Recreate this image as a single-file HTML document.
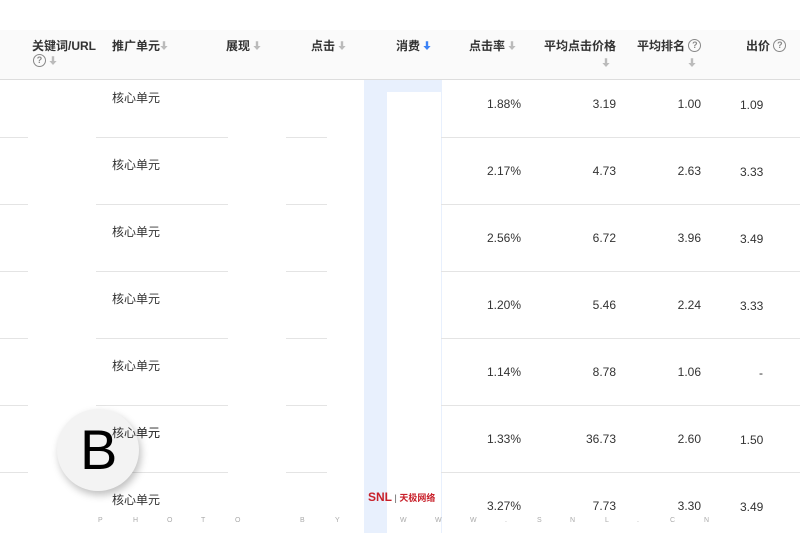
<!DOCTYPE html>
<html><head><meta charset="utf-8"><style>
*{margin:0;padding:0;box-sizing:border-box}
body{width:800px;height:533px;overflow:hidden;background:#fff;position:relative;font-family:"Liberation Sans","Noto Sans CJK SC",sans-serif;color:#333}
.a{position:absolute;white-space:nowrap}
.hdr{position:absolute;left:0;top:30px;width:800px;height:50px;background:#fafafa;border-bottom:1px solid #ddd}
.h{position:absolute;font-size:12px;line-height:16px;font-weight:bold;color:#333;top:38px;white-space:nowrap}
.q{display:inline-block;width:13px;height:13px;border:1.3px solid #888;border-radius:50%;font-size:9px;line-height:11px;text-align:center;color:#888;font-weight:bold;vertical-align:top;margin-top:1px}
.ln{position:absolute;height:1px;background:#e4e4e4}
.t{position:absolute;font-size:12px;color:#333}
.r{text-align:right;width:60px}
.w{position:absolute;top:517px;font-size:7px;color:#aaa}
svg{vertical-align:-1px}
</style></head><body>
<div class="hdr"></div>
<div style="position:absolute;left:364px;top:80px;width:77px;height:453px;background:#e8f0fd"></div>
<div style="position:absolute;left:387px;top:92px;width:54px;height:441px;background:#fff"></div>
<div style="position:absolute;left:441px;top:80px;width:1px;height:453px;background:#e8f0fd"></div>
<svg width="0" height="0" style="position:absolute"><defs><symbol id="ar" viewBox="0 0 10 12"><path d="M3.5 0h3v6h3L5 11 .5 6h3z"/></symbol></defs></svg>

<div class="h" style="left:32px">关键词/URL</div>
<div class="h" style="left:33px;top:53px"><span class="q">?</span> <svg width="8" height="10" fill="#bbb"><use href="#ar"/></svg></div>
<div class="h" style="left:112px">推广单元<svg width="8" height="10" fill="#bbb"><use href="#ar"/></svg></div>
<div class="h" style="left:226px">展现 <svg width="8" height="10" fill="#bbb"><use href="#ar"/></svg></div>
<div class="h" style="left:311px">点击 <svg width="8" height="10" fill="#bbb"><use href="#ar"/></svg></div>
<div class="h" style="left:396px">消费 <svg width="8" height="10" fill="#3b82f6"><use href="#ar"/></svg></div>
<div class="h" style="left:469px">点击率 <svg width="8" height="10" fill="#bbb"><use href="#ar"/></svg></div>
<div class="h" style="left:544px">平均点击价格</div>
<div class="h" style="left:602px;top:55px"><svg width="8" height="10" fill="#bbb"><use href="#ar"/></svg></div>
<div class="h" style="left:637px">平均排名 <span class="q">?</span></div>
<div class="h" style="left:688px;top:55px"><svg width="8" height="10" fill="#bbb"><use href="#ar"/></svg></div>
<div class="h" style="left:746px">出价 <span class="q">?</span></div>

<div id="rows"></div>
<script>
var d=[["1.88%","3.19","1.00","1.09"],["2.17%","4.73","2.63","3.33"],["2.56%","6.72","3.96","3.49"],["1.20%","5.46","2.24","3.33"],["1.14%","8.78","1.06","-"],["1.33%","36.73","2.60","1.50"],["3.27%","7.73","3.30","3.49"]];
var h="";
for(var i=0;i<7;i++){var y=80+i*67;
if(i>0){[[0,28],[96,228],[286,327],[441,800]].forEach(function(s){h+='<div class="ln" style="top:'+(y-10)+'px;left:'+s[0]+'px;width:'+(s[1]-s[0])+'px"></div>'});}
h+='<div class="t" style="left:112px;top:'+(y+9)+'px">核心单元</div>';
h+='<div class="t r" style="left:461px;top:'+(y+17)+'px">'+d[i][0]+'</div>';
h+='<div class="t r" style="left:556px;top:'+(y+17)+'px">'+d[i][1]+'</div>';
h+='<div class="t r" style="left:641px;top:'+(y+17)+'px">'+d[i][2]+'</div>';
h+='<div class="t" style="left:'+(d[i][3]=="-"?759:740)+'px;top:'+(y+18)+'px">'+d[i][3]+'</div>';}
document.getElementById("rows").innerHTML=h;
</script>
<div style="position:absolute;left:57px;top:409px;width:82px;height:82px;border-radius:50%;background:#f3f3f3;box-shadow:2px 4px 8px rgba(0,0,0,.25)"></div>
<div class="a" style="left:80px;top:418px;font-size:56px;line-height:64px;color:#000">B</div>
<div class="t" style="left:112px;top:424px">核心单元</div>
<div class="a" style="left:368px;top:490px;font-size:12px;font-weight:bold;color:#c8202a">SNL<span style="font-size:9px;color:#555;font-weight:normal"> | </span><span style="font-size:9px">天极网络</span></div>
<div id="wm"></div>
<script>
var w=[["P",98],["H",133],["O",167],["T",201],["O",235],["B",300],["Y",335],["W",400],["W",435],["W",470],[".",505],["S",537],["N",570],["L",605],[".",637],["C",670],["N",704]],s="";
w.forEach(function(x){s+='<div class="w" style="left:'+x[1]+'px">'+x[0]+'</div>'});document.getElementById("wm").innerHTML=s;
</script>
</body></html>
